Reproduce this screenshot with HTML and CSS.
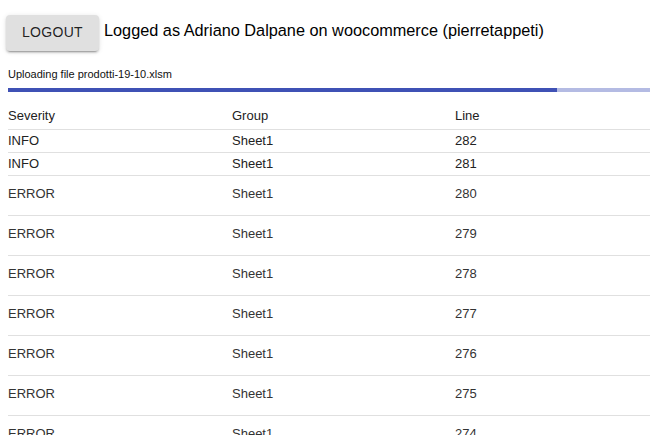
FILE: index.html
```html
<!DOCTYPE html>
<html>
<head>
<meta charset="utf-8">
<link rel="stylesheet" href="styles.css">
</head>
<body>
<div class="topbar">
  <button class="logout">LOGOUT</button>
  <span class="logged">Logged as Adriano Dalpane on woocommerce (pierretappeti)</span>
</div>
<div class="upload">
  <div class="upload-label">Uploading file prodotti-19-10.xlsm</div>
  <div class="progress"><div class="progress-fill" style="width:549px"></div></div>
</div>
<div class="table">
  <div class="row head"><span>Severity</span><span>Group</span><span>Line</span></div>
  <div class="row short"><span>INFO</span><span>Sheet1</span><span>282</span></div>
  <div class="row short"><span>INFO</span><span>Sheet1</span><span>281</span></div>
  <div class="row tall"><span>ERROR</span><span>Sheet1</span><span>280</span></div>
  <div class="row tall"><span>ERROR</span><span>Sheet1</span><span>279</span></div>
  <div class="row tall"><span>ERROR</span><span>Sheet1</span><span>278</span></div>
  <div class="row tall"><span>ERROR</span><span>Sheet1</span><span>277</span></div>
  <div class="row tall"><span>ERROR</span><span>Sheet1</span><span>276</span></div>
  <div class="row tall"><span>ERROR</span><span>Sheet1</span><span>275</span></div>
  <div class="row tall"><span>ERROR</span><span>Sheet1</span><span>274</span></div>
</div>
</body>
</html>
```

FILE: styles.css
```css
html, body {
  margin: 0;
  padding: 0;
  background: #ffffff;
  overflow: hidden;
}
body {
  font-family: "Liberation Sans", Arial, sans-serif;
  color: #000;
  width: 650px;
  height: 435px;
}
.topbar {
  display: flex;
  align-items: center;
  gap: 5px;
  padding: 15px 0 0 6px;
  height: 36px;
}
.logout {
  width: 93px;
  height: 36px;
  border: none;
  border-radius: 4px;
  background: #e0e0e0;
  box-shadow: 0 3px 1px -2px rgba(0,0,0,0.2), 0 2px 2px 0 rgba(0,0,0,0.14), 0 1px 5px 0 rgba(0,0,0,0.12);
  font-family: "Liberation Sans", Arial, sans-serif;
  font-size: 14px;
  letter-spacing: 0.3px;
  color: rgba(0,0,0,0.87);
  padding: 0 0 2px;
}
.logged {
  font-size: 16.3px;
  margin-top: -5px;
}
.upload {
  margin: 16px 0 0 8px;
}
.upload-label {
  font-size: 11px;
  line-height: 14px;
  height: 14px;
  color: #111;
}
.progress {
  margin-top: 7px;
  height: 4px;
  background: #b4bbe3;
  width: 650px;
}
.progress-fill {
  height: 4px;
  background: #3f51b5;
}
.table {
  margin-left: 8px;
  margin-top: 9px;
  width: 670px;
}
.row {
  display: grid;
  grid-template-columns: 224px 223px 1fr;
  border-bottom: 1px solid #e0e0e0;
  font-size: 13px;
  color: #222;
}
.row span {
  display: block;
}
.head {
  height: 28px;
  line-height: 29px;
  color: #222;
}
.short {
  height: 22px;
  line-height: 22px;
  font-size: 13px;
}
.tall {
  height: 39px;
  line-height: 36px;
  color: #333;
}
```
